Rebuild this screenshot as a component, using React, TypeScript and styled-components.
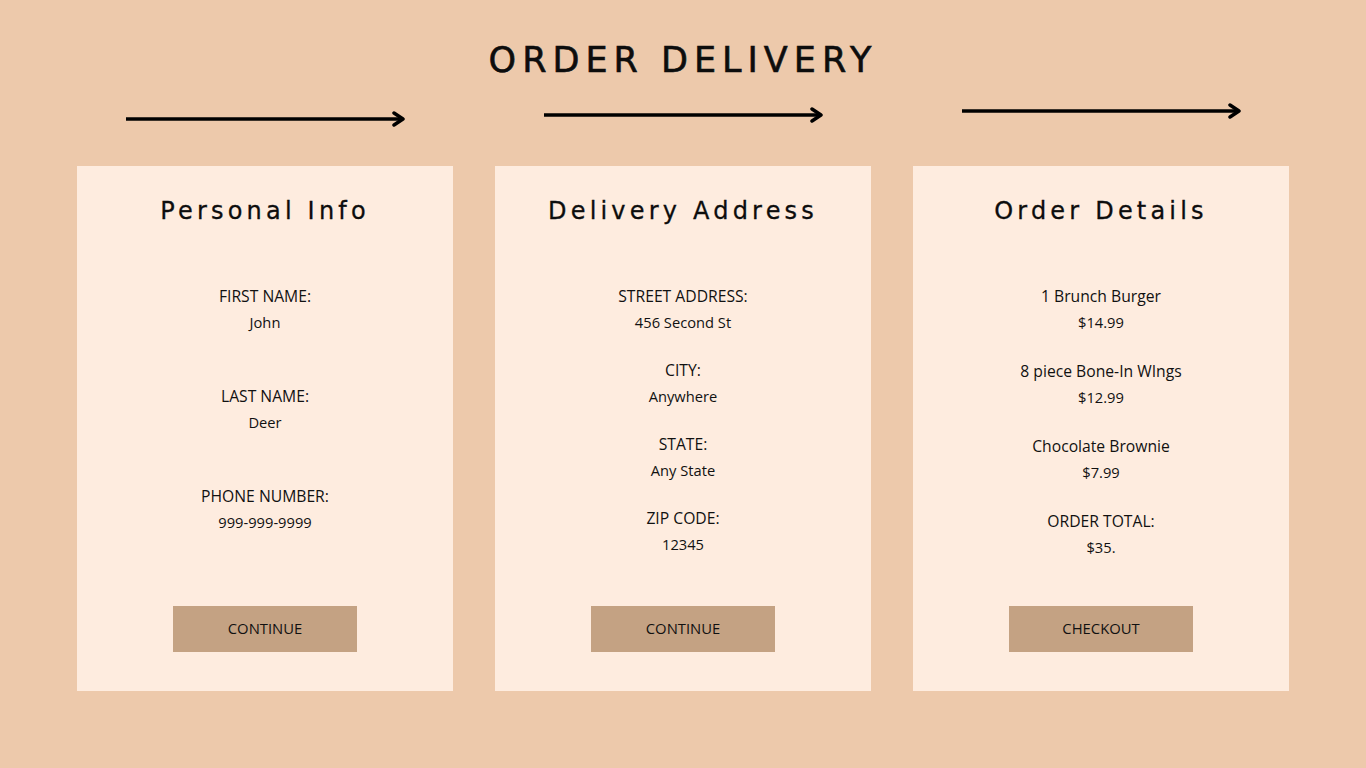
import React from "react";
import styled, { createGlobalStyle } from "styled-components";

const Global = createGlobalStyle`
  html, body { margin: 0; padding: 0; background: #edc9ab; }
  body { font-family: "Open Sans", "Liberation Sans", sans-serif; color: #111; }
`;

const Page = styled.div`
  min-height: 768px;
  background: #edc9ab;
  display: flex;
  flex-direction: column;
  align-items: center;
  padding-top: 40px;
  box-sizing: border-box;
`;

const Title = styled.h1`
  margin: 0;
  height: 40px;
  line-height: 40px;
  font-family: "DejaVu Sans", sans-serif;
  font-weight: 400;
  font-size: 35px;
  letter-spacing: 6px;
  -webkit-text-stroke: 0.6px #0d0d0d;
  color: #0d0d0d;
`;

const Grid = styled.div`
  display: grid;
  grid-template-columns: repeat(3, 376px);
  column-gap: 42px;
`;

const ArrowRow = styled(Grid)`
  margin-top: 23px;
  height: 24px;
  align-items: start;
`;

const ArrowCell = styled.div<{ $offset: number }>`
  display: flex;
  justify-content: center;
  margin-top: ${(p) => p.$offset}px;
  height: 16px;
`;

const CardRow = styled(Grid)`
  margin-top: 39px;
`;

const Card = styled.section`
  height: 525px;
  background: #feecdf;
  display: flex;
  flex-direction: column;
  align-items: center;
  padding: 30px 0 39px;
  box-sizing: border-box;
`;

const Heading = styled.h2`
  margin: 0;
  height: 30px;
  line-height: 30px;
  font-family: "DejaVu Sans", sans-serif;
  font-weight: 400;
  font-size: 24px;
  letter-spacing: 4.2px;
  -webkit-text-stroke: 0.3px #0d0d0d;
  color: #0d0d0d;
`;

const Fields = styled.div<{ $gap: number }>`
  margin-top: 57px;
  display: flex;
  flex-direction: column;
  align-items: center;
  gap: ${(p) => p.$gap}px;
`;

const Field = styled.div`
  display: flex;
  flex-direction: column;
  align-items: center;
`;

const Label = styled.div`
  font-size: 15.7px;
  line-height: 26px;
  color: #111;
`;

const Value = styled.div`
  font-size: 14.7px;
  line-height: 26px;
  color: #111;
`;

const Button = styled.button`
  margin-top: auto;
  width: 184px;
  height: 46px;
  padding: 0 0 2px;
  border: none;
  background: #c4a283;
  font-family: "Open Sans", "Liberation Sans", sans-serif;
  font-size: 14.8px;
  color: #111;
  cursor: pointer;
`;

const Arrow = () => (
  <svg width="282" height="16" viewBox="0 0 282 16">
    <line x1="2" y1="8" x2="279" y2="8" stroke="#000" strokeWidth="3.5" />
    <polyline
      points="270,2 279,8 270,14"
      fill="none"
      stroke="#000"
      strokeWidth="3.5"
      strokeLinecap="round"
      strokeLinejoin="round"
    />
  </svg>
);

type Item = { label: string; value: string };

const cards: { title: string; gap: number; items: Item[]; button: string }[] = [
  {
    title: "Personal Info",
    gap: 48,
    items: [
      { label: "FIRST NAME:", value: "John" },
      { label: "LAST NAME:", value: "Deer" },
      { label: "PHONE NUMBER:", value: "999-999-9999" },
    ],
    button: "CONTINUE",
  },
  {
    title: "Delivery Address",
    gap: 22,
    items: [
      { label: "STREET ADDRESS:", value: "456 Second St" },
      { label: "CITY:", value: "Anywhere" },
      { label: "STATE:", value: "Any State" },
      { label: "ZIP CODE:", value: "12345" },
    ],
    button: "CONTINUE",
  },
  {
    title: "Order Details",
    gap: 23,
    items: [
      { label: "1 Brunch Burger", value: "$14.99" },
      { label: "8 piece Bone-In WIngs", value: "$12.99" },
      { label: "Chocolate Brownie", value: "$7.99" },
      { label: "ORDER TOTAL:", value: "$35." },
    ],
    button: "CHECKOUT",
  },
];

const offsets = [8, 4, 0];

export default function App() {
  return (
    <>
      <Global />
      <Page>
        <Title>ORDER DELIVERY</Title>
        <ArrowRow>
          {offsets.map((o, i) => (
            <ArrowCell key={i} $offset={o}>
              <Arrow />
            </ArrowCell>
          ))}
        </ArrowRow>
        <CardRow>
          {cards.map((c) => (
            <Card key={c.title}>
              <Heading>{c.title}</Heading>
              <Fields $gap={c.gap}>
                {c.items.map((it) => (
                  <Field key={it.label}>
                    <Label>{it.label}</Label>
                    <Value>{it.value}</Value>
                  </Field>
                ))}
              </Fields>
              <Button>{c.button}</Button>
            </Card>
          ))}
        </CardRow>
      </Page>
    </>
  );
}
